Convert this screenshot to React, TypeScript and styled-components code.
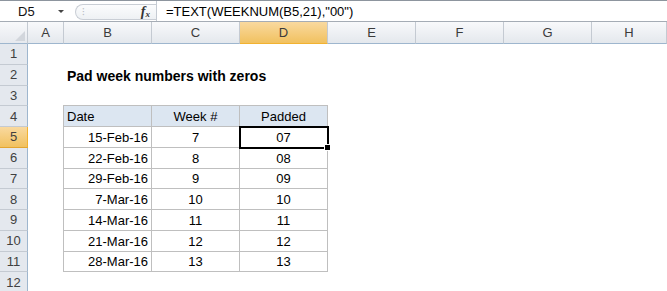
import React from 'react';
import styled, { createGlobalStyle } from 'styled-components';

const GlobalStyle = createGlobalStyle`
  html, body {
    margin: 0;
    padding: 0;
    background: #ffffff;
  }
  body {
    font-family: 'Liberation Sans', Arial, sans-serif;
    overflow: hidden;
  }
`;

const COLS = ['A', 'B', 'C', 'D', 'E', 'F', 'G', 'H'];

const data = [
  ['15-Feb-16', '7', '07'],
  ['22-Feb-16', '8', '08'],
  ['29-Feb-16', '9', '09'],
  ['7-Mar-16', '10', '10'],
  ['14-Mar-16', '11', '11'],
  ['21-Mar-16', '12', '12'],
  ['28-Mar-16', '13', '13'],
];

export default function App() {
  const rows: React.ReactNode[] = [];

  for (let r = 1; r <= 12; r++) {
    rows.push(
      <RowHead key={`rh${r}`} $active={r === 5}>
        {r}
      </RowHead>
    );
    COLS.forEach((col, ci) => {
      const inTable = r >= 4 && r <= 11 && ci >= 1 && ci <= 3;
      let content: React.ReactNode = null;
      let align: 'left' | 'center' | 'right' = 'left';

      if (r === 2 && col === 'B') {
        content = <Title>Pad week numbers with zeros</Title>;
      }
      if (r === 4 && inTable) {
        content = ['Date', 'Week #', 'Padded'][ci - 1];
        align = ci === 1 ? 'left' : 'center';
      }
      if (r >= 5 && inTable) {
        content = data[r - 5][ci - 1];
        align = ci === 1 ? 'right' : 'center';
      }

      rows.push(
        <Cell
          key={`${col}${r}`}
          $boxed={inTable}
          $head={r === 4 && inTable}
          $first={ci === 1}
          $top={r === 4}
          $align={align}
          $selected={col === 'D' && r === 5}
        >
          {content}
        </Cell>
      );
    });
  }

  return (
    <>
      <GlobalStyle />
      <Window>
        <FormulaBar>
          <NameBox>
            <NameText>D5</NameText>
            <DropArrow />
          </NameBox>
          <Divider>
            <Grip>⁝</Grip>
            <Fx>
              f<sub>x</sub>
            </Fx>
          </Divider>
          <FormulaInput>=TEXT(WEEKNUM(B5,21),"00")</FormulaInput>
        </FormulaBar>
        <Strip />
        <Sheet>
          <Corner>
            <svg width="10" height="10" viewBox="0 0 10 10">
              <polygon points="10,0 10,10 0,10" fill="#d2d6dc" />
            </svg>
          </Corner>
          {COLS.map((c) => (
            <ColHead key={c} $active={c === 'D'}>
              {c}
            </ColHead>
          ))}
          {rows}
        </Sheet>
      </Window>
    </>
  );
}

const Window = styled.div`
  width: 667px;
  height: 291px;
  display: flex;
  flex-direction: column;
  overflow: hidden;
  background: #ffffff;
`;

const FormulaBar = styled.div`
  height: 21px;
  display: flex;
  align-items: stretch;
  border-top: 1px solid #8d959e;
  border-bottom: 1px solid #a5acb5;
  background: #ffffff;
`;

const NameBox = styled.div`
  width: 70px;
  display: flex;
  align-items: center;
  justify-content: space-between;
  padding: 0 6px 0 18px;
  box-sizing: border-box;
  background: #ffffff;
`;

const NameText = styled.span`
  font-size: 13px;
  color: #111;
`;

const DropArrow = styled.span`
  width: 0;
  height: 0;
  border-left: 3px solid transparent;
  border-right: 3px solid transparent;
  border-top: 3px solid #444;
  margin-top: 1px;
`;

const Divider = styled.div`
  width: 81px;
  margin: 3px 0 1px 5px;
  display: flex;
  align-items: center;
  justify-content: space-between;
  padding: 0 6px 0 6px;
  box-sizing: border-box;
  border: 1px solid #c9ced5;
  border-right: none;
  border-radius: 9px 0 0 9px;
  background: linear-gradient(#fbfcfd, #eef1f4);
`;

const Grip = styled.span`
  font-size: 10px;
  color: #b7bcc4;
  line-height: 1;
`;

const Fx = styled.span`
  font-family: 'Liberation Serif', 'Times New Roman', serif;
  font-style: italic;
  font-weight: bold;
  font-size: 14px;
  color: #333;
  line-height: 1;

  sub {
    font-size: 9px;
    vertical-align: -1px;
  }
`;

const FormulaInput = styled.div`
  flex: 1;
  display: flex;
  align-items: center;
  padding-left: 9px;
  border-left: 1px solid #c5cbd3;
  font-size: 13px;
  color: #000;
  white-space: nowrap;
`;

const Strip = styled.div`
  height: 2px;
  background: #e3e8ee;
`;

const Sheet = styled.div`
  display: grid;
  grid-template-columns: 28px 36px 88px 88px 88px 88px 88px 88px 75px;
  grid-template-rows: 22px;
  grid-auto-rows: 20.75px;
`;

const headerBase = `
  display: flex;
  align-items: center;
  justify-content: center;
  box-sizing: border-box;
  font-size: 13px;
  color: #3b3b3b;
  border-right: 1px solid #c4cad2;
  border-bottom: 1px solid #9eb6ce;
`;

const Corner = styled.div`
  ${headerBase};
  align-items: flex-end;
  justify-content: flex-end;
  padding: 0 2px 2px 0;
  background: linear-gradient(#f8f9fb, #e6e9ee);
`;

const ColHead = styled.div<{ $active?: boolean }>`
  ${headerBase};
  background: ${(p) =>
    p.$active
      ? 'linear-gradient(#f9d99f, #f1c15f)'
      : 'linear-gradient(#f8f9fb, #e4e8ed)'};
  border-bottom-color: ${(p) => (p.$active ? '#f2b230' : '#9eb6ce')};
  &:last-child {
    border-right: none;
  }
`;

const RowHead = styled.div<{ $active?: boolean }>`
  ${headerBase};
  border-bottom-color: ${(p) => (p.$active ? '#e3a531' : '#c4cad2')};
  border-right-color: ${(p) => (p.$active ? '#f2b230' : '#9eb6ce')};
  background: ${(p) =>
    p.$active ? 'linear-gradient(#f9d99f, #f1c15f)' : '#e4e8ee'};
  color: #404040;
`;

const Cell = styled.div<{
  $boxed?: boolean;
  $head?: boolean;
  $first?: boolean;
  $top?: boolean;
  $align: 'left' | 'center' | 'right';
  $selected?: boolean;
}>`
  position: relative;
  box-sizing: border-box;
  display: flex;
  align-items: flex-end;
  justify-content: ${(p) =>
    p.$align === 'left' ? 'flex-start' : p.$align === 'right' ? 'flex-end' : 'center'};
  padding: 0 3px 2px 3px;
  font-size: 13px;
  line-height: 15px;
  color: #000;
  white-space: nowrap;
  background: ${(p) => (p.$head ? '#dce6f1' : 'transparent')};
  border-right: ${(p) => (p.$boxed ? '1px solid #bfbfbf' : 'none')};
  border-bottom: ${(p) => (p.$boxed ? '1px solid #bfbfbf' : 'none')};
  border-left: ${(p) => (p.$boxed && p.$first ? '1px solid #bfbfbf' : 'none')};
  border-top: ${(p) => (p.$boxed && p.$top ? '1px solid #bfbfbf' : 'none')};
  margin-left: ${(p) => (p.$boxed && p.$first ? '-1px' : '0')};
  margin-top: ${(p) => (p.$boxed && p.$top ? '-1px' : '0')};
  z-index: ${(p) => (p.$selected ? 2 : 0)};
  outline: ${(p) => (p.$selected ? '2px solid #000' : 'none')};
  outline-offset: -1px;

  &::after {
    content: '';
    display: ${(p) => (p.$selected ? 'block' : 'none')};
    position: absolute;
    right: -4px;
    bottom: -4px;
    width: 5px;
    height: 5px;
    background: #000;
    border: 1px solid #fff;
  }
`;

const Title = styled.span`
  position: relative;
  z-index: 1;
  font-size: 14px;
  font-weight: bold;
  color: #000;
`;
